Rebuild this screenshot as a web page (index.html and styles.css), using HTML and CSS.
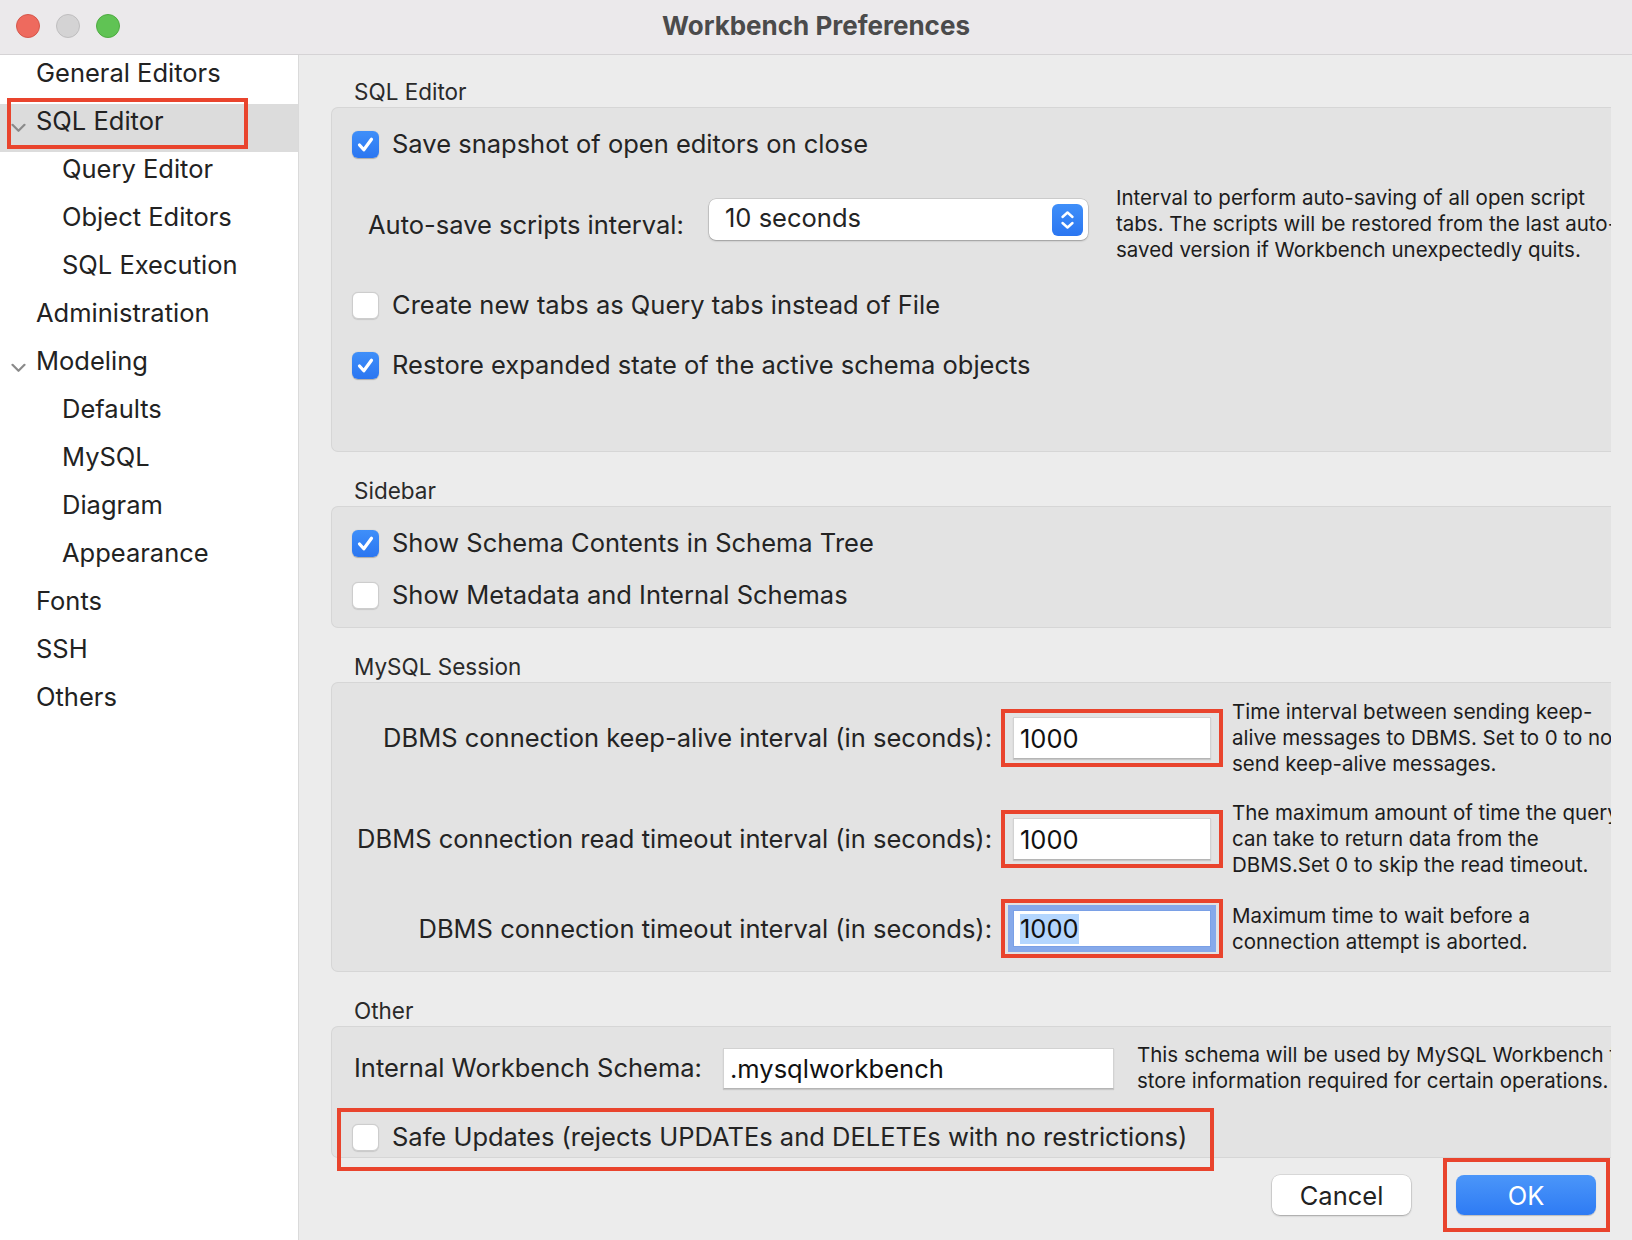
FILE: index.html
```html
<!DOCTYPE html>
<html lang="en">
<head>
<meta charset="utf-8">
<title>Workbench Preferences</title>
<link rel="stylesheet" href="styles.css">
</head>
<body>
<div class="window">
  <header class="titlebar">
    <div class="lights">
      <span class="light light-red"></span>
      <span class="light light-gray"></span>
      <span class="light light-green"></span>
    </div>
    <div class="title">Workbench Preferences</div>
    <div class="titlebar-spacer"></div>
  </header>

  <div class="main">
    <nav class="sidebar">
      <div class="nav-item">General Editors</div>
      <div class="nav-item has-chev selected">
        <span class="chev"><svg width="15" height="10" viewBox="0 0 15 10"><path d="M1.5 1.8 L7.5 7.8 L13.5 1.8" fill="none" stroke="#8a8a8a" stroke-width="2.2" stroke-linecap="round" stroke-linejoin="round"/></svg></span>SQL Editor
        <span class="mark mark-nav"></span>
      </div>
      <div class="nav-item sub">Query Editor</div>
      <div class="nav-item sub">Object Editors</div>
      <div class="nav-item sub">SQL Execution</div>
      <div class="nav-item">Administration</div>
      <div class="nav-item has-chev">
        <span class="chev"><svg width="15" height="10" viewBox="0 0 15 10"><path d="M1.5 1.8 L7.5 7.8 L13.5 1.8" fill="none" stroke="#8a8a8a" stroke-width="2.2" stroke-linecap="round" stroke-linejoin="round"/></svg></span>Modeling
      </div>
      <div class="nav-item sub">Defaults</div>
      <div class="nav-item sub">MySQL</div>
      <div class="nav-item sub">Diagram</div>
      <div class="nav-item sub">Appearance</div>
      <div class="nav-item">Fonts</div>
      <div class="nav-item">SSH</div>
      <div class="nav-item">Others</div>
    </nav>

    <section class="content">
      <div class="group-label first">SQL Editor</div>
      <div class="group group-sql">
        <div class="check-row">
          <span class="cb on"><svg width="27" height="27" viewBox="0 0 27 27"><path d="M7.5 14 L11.8 18.8 L19.5 8.2" fill="none" stroke="#fff" stroke-width="3.2" stroke-linecap="round" stroke-linejoin="round"/></svg></span>
          <span>Save snapshot of open editors on close</span>
        </div>
        <div class="autosave-row">
          <span class="autosave-label">Auto-save scripts interval:</span>
          <div class="select">
            <span class="select-value">10 seconds</span>
            <span class="stepper"><svg width="31" height="32" viewBox="0 0 31 32"><path d="M10.5 13 L15.5 8.5 L20.5 13" fill="none" stroke="#fff" stroke-width="2.4" stroke-linecap="round" stroke-linejoin="round"/><path d="M10.5 19 L15.5 23.5 L20.5 19" fill="none" stroke="#fff" stroke-width="2.4" stroke-linecap="round" stroke-linejoin="round"/></svg></span>
          </div>
          <p class="help help-autosave">Interval to perform auto-saving of all open script<br>tabs. The scripts will be restored from the last auto-<br>saved version if Workbench unexpectedly quits.</p>
        </div>
        <div class="check-row row-newtabs">
          <span class="cb off"></span>
          <span>Create new tabs as Query tabs instead of File</span>
        </div>
        <div class="check-row row-restore">
          <span class="cb on"><svg width="27" height="27" viewBox="0 0 27 27"><path d="M7.5 14 L11.8 18.8 L19.5 8.2" fill="none" stroke="#fff" stroke-width="3.2" stroke-linecap="round" stroke-linejoin="round"/></svg></span>
          <span>Restore expanded state of the active schema objects</span>
        </div>
      </div>

      <div class="group-label">Sidebar</div>
      <div class="group group-sidebar">
        <div class="check-row">
          <span class="cb on"><svg width="27" height="27" viewBox="0 0 27 27"><path d="M7.5 14 L11.8 18.8 L19.5 8.2" fill="none" stroke="#fff" stroke-width="3.2" stroke-linecap="round" stroke-linejoin="round"/></svg></span>
          <span>Show Schema Contents in Schema Tree</span>
        </div>
        <div class="check-row row-metadata">
          <span class="cb off"></span>
          <span>Show Metadata and Internal Schemas</span>
        </div>
      </div>

      <div class="group-label">MySQL Session</div>
      <div class="group group-session">
        <div class="session-row">
          <span class="session-label">DBMS connection keep-alive interval (in seconds):</span>
          <span class="redwrap"><span class="field">1000</span></span>
          <p class="help">Time interval between sending keep-<br>alive messages to DBMS. Set to 0 to not<br>send keep-alive messages.</p>
        </div>
        <div class="session-row row-read">
          <span class="session-label">DBMS connection read timeout interval (in seconds):</span>
          <span class="redwrap"><span class="field">1000</span></span>
          <p class="help">The maximum amount of time the query<br>can take to return data from the<br>DBMS.Set 0 to skip the read timeout.</p>
        </div>
        <div class="session-row row-timeout">
          <span class="session-label">DBMS connection timeout interval (in seconds):</span>
          <span class="redwrap redwrap-focus"><span class="field field-focus"><span class="selection">1000</span></span></span>
          <p class="help">Maximum time to wait before a<br>connection attempt is aborted.</p>
        </div>
      </div>

      <div class="group-label">Other</div>
      <div class="group group-other">
        <div class="schema-row">
          <span class="schema-label">Internal Workbench Schema:</span>
          <span class="field field-schema">.mysqlworkbench</span>
          <p class="help help-schema">This schema will be used by MySQL Workbench to<br>store information required for certain operations.</p>
        </div>
        <div class="check-row row-safe">
          <span class="cb off"></span>
          <span>Safe Updates (rejects UPDATEs and DELETEs with no restrictions)</span>
          <span class="mark mark-safe"></span>
        </div>
      </div>

      <div class="buttons">
        <span class="btn btn-cancel">Cancel</span>
        <span class="redwrap-btn"><span class="btn btn-ok">OK</span></span>
      </div>
    </section>
  </div>
</div>
</body>
</html>
```

FILE: styles.css
```css
* { box-sizing: border-box; }
html, body { margin: 0; padding: 0; }
body {
  width: 1632px;
  height: 1240px;
  overflow: hidden;
  background: #ececec;
  font-family: Inter, "Helvetica Neue", "Liberation Sans", Arial, sans-serif;
  color: #242424;
}
.window { display: flex; flex-direction: column; height: 1240px; }

/* title bar */
.titlebar {
  height: 55px;
  flex: none;
  display: grid;
  grid-template-columns: 1fr auto 1fr;
  align-items: center;
  background: #ebe9eb;
  border-bottom: 1px solid #d5d3d5;
  padding-bottom: 3px;
}
.lights { display: flex; gap: 16px; padding-left: 16px; padding-top: 1px; }
.light { width: 24px; height: 24px; border-radius: 50%; }
.light-red { background: #ee6a5e; border: 1px solid #d5574b; }
.light-gray { background: #d4d3d4; border: 1px solid #bfbebf; }
.light-green { background: #60c354; border: 1px solid #4eab41; }
.title { font-weight: 700; font-size: 26px; color: #4b4b4b; }

.main { flex: 1; display: flex; min-height: 0; }

/* sidebar */
.sidebar {
  width: 299px;
  flex: none;
  background: #ffffff;
  border-right: 1px solid #dadada;
  padding-top: 1px;
}
.nav-item {
  position: relative;
  display: flex;
  align-items: flex-start;
  height: 48px;
  line-height: 34px;
  padding-left: 36px;
  font-size: 25.5px;
  color: #222;
  white-space: nowrap;
}
.nav-item.has-chev { padding-left: 11px; }
.nav-item.sub { padding-left: 62px; }
.nav-item.selected { background: #dcdcdc; }
.chev { width: 25px; flex: none; height: 34px; padding-top: 19px; display: block; }
.chev svg { display: block; }

.mark { position: absolute; border: 4px solid #e9442d; pointer-events: none; }
.mark-nav { top: -6px; left: 7px; width: 241px; height: 51px; }

/* content */
.content {
  flex: 1;
  min-width: 0;
  padding: 25px 21px 0 32px;
}
.group-label {
  font-size: 22.5px;
  line-height: 24px;
  padding-left: 23px;
  margin-top: 27px;
  margin-bottom: 3px;
  color: #2a2a2a;
}
.group-label.first { margin-top: 0; }
.group {
  background: #e3e3e3;
  border: 1px solid #d6d6d6;
  border-right: none;
  border-radius: 7px 0 0 7px;
  padding-left: 20px;
  white-space: nowrap;
}
.group-sql { padding-top: 17px; padding-bottom: 67px; }
.group-sidebar { padding-top: 17px; padding-bottom: 13px; }
.group-session { padding-top: 16px; padding-bottom: 13px; }
.group-other { padding-top: 15px; padding-bottom: 1px; }

.check-row {
  display: flex;
  align-items: center;
  gap: 13px;
  height: 38px;
  font-size: 25.5px;
  line-height: 38px;
}
.row-newtabs { margin-top: 23px; }
.row-restore { margin-top: 22px; }
.row-metadata { margin-top: 14px; }
.row-safe { margin-top: 24px; position: relative; }
.mark-safe { top: -10px; left: -15px; width: 877px; height: 63px; }

.cb { width: 27px; height: 27px; border-radius: 6px; flex: none; display: block; }
.cb svg { display: block; }
.cb.on { background: linear-gradient(#3f8ff9, #2b76f1); box-shadow: 0 0.5px 1px rgba(0,0,0,0.25); }
.cb.off { background: #ffffff; border: 1px solid #cdcdcd; box-shadow: 0 0.5px 1px rgba(0,0,0,0.12); }

.autosave-row { display: flex; align-items: flex-start; margin-top: 22px; }
.autosave-label { margin-left: 16px; width: 341px; flex: none; margin-top: 21px; font-size: 25.5px; line-height: 38px; }
.select {
  width: 379px;
  height: 41px;
  flex: none;
  margin-top: 14px;
  display: flex;
  align-items: center;
  justify-content: space-between;
  padding: 0 5px 0 16px;
  background: #ffffff;
  border-radius: 7px;
  box-shadow: 0 0 0 0.5px rgba(0,0,0,0.18), 0 1px 2px rgba(0,0,0,0.25);
  font-size: 25.5px;
}
.select-value { padding-bottom: 4px; }
.stepper { width: 31px; height: 32px; border-radius: 6px; background: linear-gradient(#3f8ff9, #2b76f1); display: block; }
.stepper svg { display: block; }

.help {
  margin: 0;
  flex: 0 1 auto;
  min-width: 0;
  overflow: hidden;
  font-size: 20.5px;
  line-height: 26px;
  color: #1c1c1c;
  white-space: nowrap;
}
.help-autosave { margin-left: 28px; }

.session-row { display: flex; align-items: center; font-size: 25.5px; }
.row-read { margin-top: 23px; }
.row-timeout { margin-top: 21px; }
.session-label { width: 640px; flex: none; text-align: right; line-height: 38px; }
.redwrap {
  flex: none;
  margin-left: 9px;
  margin-right: 9px;
  border: 4px solid #e9442d;
  padding: 4px 8px;
  display: block;
}
.redwrap-focus { padding: 7px 8px; }
.field {
  display: flex;
  align-items: center;
  width: 198px;
  height: 42px;
  padding-left: 6px;
  background: #ffffff;
  border: 1px solid #d2d2d2;
  border-bottom-color: #b5b5b5;
  box-shadow: 0 1px 1px rgba(0,0,0,0.12);
  font-size: 25.5px;
  color: #111;
}
.field-focus { height: 37px; border-color: #7aa0e6; box-shadow: 0 0 0 5px #86a9ea; }
.selection { background: #b4d6fe; line-height: 30px; }

.schema-row { display: flex; align-items: center; height: 52px; font-size: 25.5px; }
.schema-label { width: 371px; flex: none; padding-left: 2px; line-height: 38px; }
.field-schema { width: 391px; height: 41px; flex: none; }
.help-schema { margin-left: 23px; }

/* buttons */
.buttons {
  display: flex;
  justify-content: flex-end;
  align-items: center;
  margin-right: 1px;
}
.btn {
  display: flex;
  align-items: center;
  justify-content: center;
  width: 140px;
  height: 40px;
  border-radius: 8px;
  font-size: 25.5px;
}
.btn-cancel {
  width: 139px;
  margin-right: 32px;
  background: #ffffff;
  color: #222;
  box-shadow: 0 0 0 0.5px rgba(0,0,0,0.15), 0 1px 2px rgba(0,0,0,0.25);
}
.redwrap-btn { border: 4px solid #e9442d; padding: 13px 10px 13px 9px; display: block; }
.btn-ok {
  background: linear-gradient(#4b96f9, #2e7bf4);
  color: #ffffff;
  box-shadow: 0 1px 1px rgba(0,0,0,0.2);
}
```
